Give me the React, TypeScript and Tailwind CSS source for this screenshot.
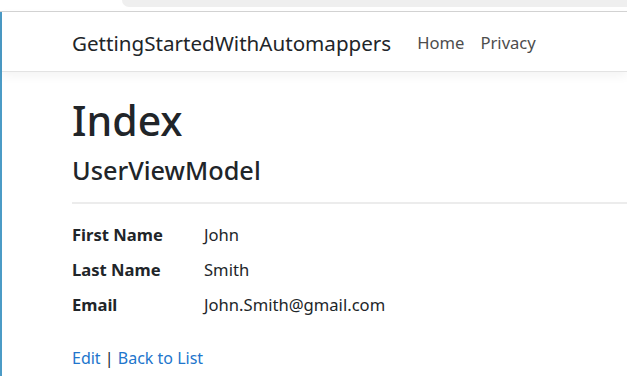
const rows = [
  { label: "First Name", value: "John" },
  { label: "Last Name", value: "Smith" },
  { label: "Email", value: "John.Smith@gmail.com" },
];

export default function App() {
  return (
    <div className="min-h-screen bg-white text-[#212529] font-['Noto_Sans','Open_Sans',sans-serif] overflow-hidden">
      {/* browser chrome remnant */}
      <div className="h-[11px] bg-white">
        <div className="ml-[122px] h-[7px] rounded-bl-[14px] bg-[#efefef]" />
      </div>
      <div className="h-px bg-[#d4d4d4]" />

      <div className="border-l-2 border-[#4b9bc6] min-h-[364px]">
        <header className="h-[60px] pt-[3px] flex items-center pl-[70px] border-b border-[#e3e3e3] shadow-[0_4px_10px_rgba(0,0,0,0.05)]">
          <span className="text-[20.6px] mr-[18px] whitespace-nowrap">GettingStartedWithAutomappers</span>
          <nav className="flex text-[16.6px] text-[#4d4d4d]">
            <a className="px-[8px]">Home</a>
            <a className="px-[8px]">Privacy</a>
          </nav>
        </header>

        <main className="pl-[70px]">
          <h1 className="mt-[22px] text-[41px] font-medium leading-[52px]">Index</h1>
          <h4 className="mt-[8px] text-[25.3px] font-medium leading-[32px]">UserViewModel</h4>
          <hr className="mt-[16px] border-t-2 border-[#ececec]" />
          <dl className="mt-[18px] text-[16.6px] leading-[26.4px]">
            {rows.map((r) => (
              <div key={r.label} className="flex mb-[8.8px]">
                <dt className="w-[132px] font-bold">{r.label}</dt>
                <dd>{r.value}</dd>
              </div>
            ))}
          </dl>
          <div className="mt-[26px] text-[16px] leading-[26.4px]">
            <a className="text-[#2175cc]">Edit</a> | <a className="text-[#2175cc]">Back to List</a>
          </div>
        </main>
      </div>
    </div>
  );
}
